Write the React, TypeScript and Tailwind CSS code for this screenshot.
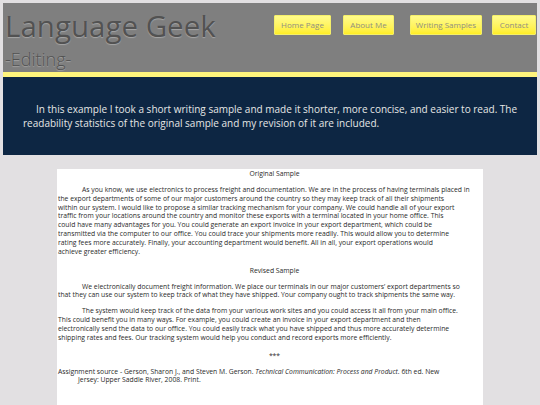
export default function App() {
  const font = { fontFamily: '"Open Sans", "Liberation Sans", sans-serif' };

  return (
    <div className="min-h-[405px] bg-[#e2e0e2] pt-[3px]" style={font}>
      {/* header */}
      <div className="mx-[3px] flex h-[69px] justify-between bg-[#7f7f7f]">
        <div className="pl-[2px] pt-[2.6px]">
          <div className="text-[29.5px] leading-[40px] text-[#525252] [text-shadow:0_1px_1px_rgba(170,170,170,0.9)]">
            Language Geek
          </div>
          <div className="mt-[2.4px] text-[18px] font-light leading-[22px] text-[#525252] [text-shadow:0_1px_1px_rgba(170,170,170,0.9)]">
            -Editing-
          </div>
        </div>
        <div className="flex items-start pt-[12px] pr-[1px]">
          <NavButton label="Home Page" className="w-[57px]" />
          <NavButton label="About Me" className="ml-[12px] w-[51px]" />
          <NavButton label="Writing Samples" className="ml-[16px] w-[72px]" />
          <NavButton label="Contact" className="ml-[10px] w-[44px]" />
        </div>
      </div>
      <div className="mx-[3px] h-[5px] bg-[#fff57c]" />
      <div className="mx-[3px] flex h-[78px] items-center bg-[#0d2643] pl-[20px] pr-[14px]">
        <p className="indent-[13px] text-[10px] leading-[14px] text-[#e6e6e6]">
          In this example I took a short writing sample and made it shorter, more concise, and easier to read. The
          readability statistics of the original sample and my revision of it are included.
        </p>
      </div>

      {/* content */}
      <div className="mx-auto mt-[14px] w-[426px] bg-white pt-[1px] pb-[20px] pl-[1px] pr-[8px] text-[6.8px] leading-[8.86px] text-[#2a2a2a] whitespace-nowrap">
        <p className="pl-[16px] text-center">Original Sample</p>
        <p className="mt-[7px] indent-[24px]">
          As you know, we use electronics to process freight and documentation. We are in the process of having terminals placed in
          <br />
          the export departments of some of our major customers around the country so they may keep track of all their shipments
          <br />
          within our system. I would like to propose a similar tracking mechanism for your company. We could handle all of your export
          <br />
          traffic from your locations around the country and monitor these exports with a terminal located in your home office. This
          <br />
          could have many advantages for you. You could generate an export invoice in your export department, which could be
          <br />
          transmitted via the computer to our office. You could trace your shipments more readily. This would allow you to determine
          <br />
          rating fees more accurately. Finally, your accounting department would benefit. All in all, your export operations would
          <br />
          achieve greater efficiency.
        </p>
        <p className="mt-[10px] pl-[16px] text-center">Revised Sample</p>
        <p className="mt-[7px] indent-[24px]">
          We electronically document freight information. We place our terminals in our major customers’ export departments so
          <br />
          that they can use our system to keep track of what they have shipped. Your company ought to track shipments the same way.
        </p>
        <p className="mt-[7px] indent-[24px]">
          The system would keep track of the data from your various work sites and you could access it all from your main office.
          <br />
          This could benefit you in many ways. For example, you could create an invoice in your export department and then
          <br />
          electronically send the data to our office. You could easily track what you have shipped and thus more accurately determine
          <br />
          shipping rates and fees. Our tracking system would help you conduct and record exports more efficiently.
        </p>
        <p className="mt-[9px] pl-[16px] text-center">***</p>
        <p className="mt-[7px] pl-[20px] -indent-[20px]">
          Assignment source - Gerson, Sharon J., and Steven M. Gerson. <i>Technical Communication: Process and Product</i>. 6th ed. New
          <br />
          Jersey: Upper Saddle River, 2008. Print.
        </p>
      </div>
    </div>
  );
}

function NavButton({ label, className }: { label: string; className: string }) {
  return (
    <div
      className={
        'flex h-[20px] items-center justify-center rounded-[1px] border border-[#f4ef6a] bg-gradient-to-b from-[#fffb8a] to-[#ffee22] text-[8px] text-[#8f8f80] ' +
        className
      }
    >
      {label}
    </div>
  );
}
